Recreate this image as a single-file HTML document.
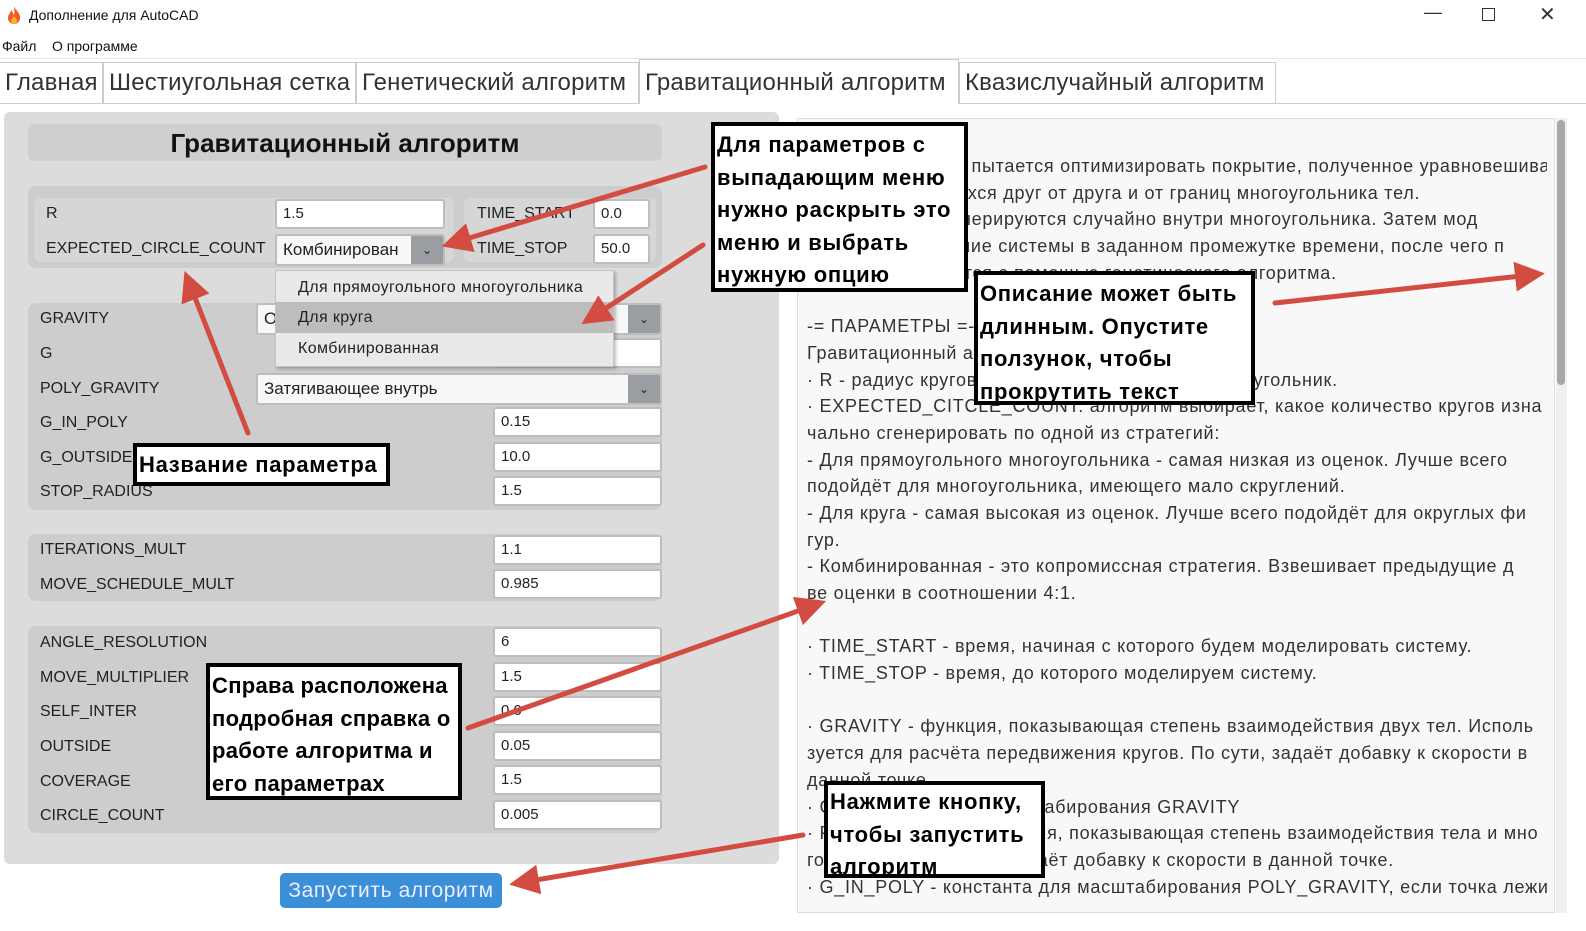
<!DOCTYPE html>
<html><head><meta charset="utf-8"><style>
*{margin:0;padding:0;box-sizing:border-box}
body{width:1586px;height:931px;background:#fff;font-family:"Liberation Sans",sans-serif;position:relative;overflow:hidden;color:#222}
.a{position:absolute}
.tab{position:absolute;top:62px;height:42px;border:1px solid #ccc;background:#fff;font-size:24px;letter-spacing:0.2px;color:#333;line-height:40px;padding-left:5px;white-space:nowrap}
.grp{position:absolute;background:#cdcdcd;border-radius:8px}
.lbl{position:absolute;font-size:16px;color:#222;white-space:nowrap}
.inp{position:absolute;height:30px;background:#fff;border:2px solid #bdbdbd;border-radius:3px;font-size:15px;line-height:26px;padding-left:6px;color:#222}
.combo{position:absolute;height:32px;background:#f7f7f7;border:2px solid #bdbdbd;border-radius:3px;font-size:17px;line-height:28px;padding-left:6px;overflow:hidden;white-space:nowrap}
.combo .arr{position:absolute;right:0;top:0;width:32px;height:100%;background:#9a9ea3;color:#222;text-align:center;font-size:12px;line-height:28px}
.note{position:absolute;background:#fff;border:4px solid #000;font-weight:bold;font-size:22px;letter-spacing:0.7px;color:#000;padding-left:2px;white-space:nowrap;overflow:hidden}
.desc div{height:26.7px;line-height:26.7px;white-space:nowrap;overflow:hidden}
</style></head><body>
<div class="a" style="left:6px;top:5px;width:16px;height:20px">
<svg width="16" height="20" viewBox="0 0 16 20"><path d="M8 1C9 5 14 7 14 13A6 6 0 0 1 2 13C2 9 5 8 5 5C7 7 7 9 8 10C9 7 8 4 8 1Z" fill="#f05a22"/><path d="M8 11C10 13 11 14 11 16A3 3 0 0 1 5 16C5 14 7 13 8 11Z" fill="#ffb02e"/></svg></div>
<div class="a" style="left:29px;top:7px;font-size:14px;color:#111">Дополнение для AutoCAD</div>
<div class="a" style="left:1424px;top:2px;font-size:18px;color:#333">—</div>
<div class="a" style="left:1482px;top:8px;width:13px;height:13px;border:1px solid #333"></div>
<div class="a" style="left:1539px;top:2px;font-size:20px;color:#333">✕</div>
<div class="a" style="left:2px;top:38px;font-size:14px;color:#111">Файл</div>
<div class="a" style="left:52px;top:38px;font-size:14px;color:#111">О программе</div>
<div class="a" style="left:0;top:58px;width:1586px;height:1px;background:#e6e6e6"></div>
<div class="tab" style="left:0;width:103px;border-left:none">Главная</div>
<div class="tab" style="left:103px;width:253px">Шестиугольная сетка</div>
<div class="tab" style="left:356px;width:283px">Генетический алгоритм</div>
<div class="tab" style="left:639px;width:320px;top:59px;height:45px;border-bottom:none;line-height:46px">Гравитационный алгоритм</div>
<div class="tab" style="left:959px;width:317px">Квазислучайный алгоритм</div>
<div class="a" style="left:1276px;top:103px;width:310px;height:1px;background:#ccc"></div>
<div class="a" style="left:4px;top:112px;width:775px;height:752px;background:#dcdcdc;border-radius:6px"></div>
<div class="a" style="left:28px;top:124px;width:634px;height:37px;background:#cfcfcf;border-radius:6px;text-align:center;font-weight:bold;font-size:26px;line-height:38px;color:#111">Гравитационный алгоритм</div>
<div class="grp" style="left:28px;top:186px;width:634px;height:82px"></div>
<div class="a" style="left:34px;top:198px;width:420px;height:64px;background:#d6d6d6;border-radius:6px"></div>
<div class="a" style="left:464px;top:198px;width:192px;height:64px;background:#d6d6d6;border-radius:6px"></div>
<div class="lbl" style="left:46px;top:205px">R</div>
<div class="lbl" style="left:46px;top:240px">EXPECTED_CIRCLE_COUNT</div>
<div class="inp" style="left:275px;top:199px;width:170px">1.5</div>
<div class="combo" style="left:275px;top:234px;width:170px">Комбинирован<div class="arr">⌄</div></div>
<div class="lbl" style="left:477px;top:205px">TIME_START</div>
<div class="lbl" style="left:477px;top:240px">TIME_STOP</div>
<div class="inp" style="left:593px;top:199px;width:57px">0.0</div>
<div class="inp" style="left:593px;top:234px;width:57px">50.0</div>

<div class="grp" style="left:28px;top:303px;width:634px;height:207px"></div>
<div class="lbl" style="left:40px;top:310px">GRAVITY</div>
<div class="lbl" style="left:40px;top:345px">G</div>
<div class="lbl" style="left:40px;top:380px">POLY_GRAVITY</div>
<div class="lbl" style="left:40px;top:414px">G_IN_POLY</div>
<div class="lbl" style="left:40px;top:449px">G_OUTSIDE</div>
<div class="lbl" style="left:40px;top:483px">STOP_RADIUS</div>
<div class="combo" style="left:256px;top:303px;width:406px">O<div class="arr">⌄</div></div>
<div class="inp" style="left:493px;top:338px;width:169px"></div>
<div class="combo" style="left:256px;top:373px;width:406px">Затягивающее внутрь<div class="arr">⌄</div></div>
<div class="inp" style="left:493px;top:407px;width:169px">0.15</div>
<div class="inp" style="left:493px;top:442px;width:169px">10.0</div>
<div class="inp" style="left:493px;top:476px;width:169px">1.5</div>

<div class="grp" style="left:28px;top:534px;width:634px;height:67px"></div>
<div class="lbl" style="left:40px;top:541px">ITERATIONS_MULT</div>
<div class="lbl" style="left:40px;top:576px">MOVE_SCHEDULE_MULT</div>
<div class="inp" style="left:493px;top:535px;width:169px">1.1</div>
<div class="inp" style="left:493px;top:569px;width:169px">0.985</div>

<div class="grp" style="left:28px;top:626px;width:634px;height:207px"></div>
<div class="lbl" style="left:40px;top:634px">ANGLE_RESOLUTION</div>
<div class="lbl" style="left:40px;top:669px">MOVE_MULTIPLIER</div>
<div class="lbl" style="left:40px;top:703px">SELF_INTER</div>
<div class="lbl" style="left:40px;top:738px">OUTSIDE</div>
<div class="lbl" style="left:40px;top:773px">COVERAGE</div>
<div class="lbl" style="left:40px;top:807px">CIRCLE_COUNT</div>
<div class="inp" style="left:493px;top:627px;width:169px">6</div>
<div class="inp" style="left:493px;top:662px;width:169px">1.5</div>
<div class="inp" style="left:493px;top:696px;width:169px">0.0</div>
<div class="inp" style="left:493px;top:731px;width:169px">0.05</div>
<div class="inp" style="left:493px;top:765px;width:169px">1.5</div>
<div class="inp" style="left:493px;top:800px;width:169px">0.005</div>

<div class="a" style="left:275px;top:270px;width:339px;height:97px;background:#e9e9e9;border:1px solid #c4c4c4;box-shadow:2px 2px 3px rgba(0,0,0,.25);font-size:16px;letter-spacing:0.4px">
<div style="height:31px;line-height:33px;padding-left:22px">Для прямоугольного многоугольника</div>
<div style="height:31px;line-height:31px;padding-left:22px;background:#bdbdbd">Для круга</div>
<div style="height:31px;line-height:31px;padding-left:22px">Комбинированная</div>
</div>

<div class="a" style="left:280px;top:873px;width:222px;height:35px;background:#3b8ed8;border-radius:5px;color:#eef;font-size:21px;letter-spacing:0.6px;text-align:center;line-height:36px">Запустить алгоритм</div>

<div class="a" style="left:797px;top:118px;width:758px;height:795px;background:#f8f8f8;border:1px solid #ddd"></div>
<div class="a" style="left:1556px;top:118px;width:11px;height:795px;background:#f0f0f0"></div>
<div class="a" style="left:1557px;top:120px;width:8px;height:265px;background:#a8a8a8;border-radius:4px"></div>
<div class="a desc" style="left:807px;top:153px;width:740px;font-size:18px;letter-spacing:0.75px;color:#333">
<div>Данный алгоритм пытается оптимизировать покрытие, полученное уравновешивани</div>
<div>ем отталкивающихся друг от друга и от границ многоугольника тел.</div>
<div>Сначала круги генерируются случайно внутри многоугольника. Затем мод</div>
<div>елируется движение системы в заданном промежутке времени, после чего п</div>
<div>окрытие улучшается с помощью генетического алгоритма.</div>
<div></div>
<div>-= ПАРАМЕТРЫ =-</div>
<div>Гравитационный алгоритм</div>
<div>· R - радиус кругов, которыми покрывается многоугольник.</div>
<div>· EXPECTED_CITCLE_COUNT: алгоритм выбирает, какое количество кругов изна</div>
<div>чально сгенерировать по одной из стратегий:</div>
<div>- Для прямоугольного многоугольника - самая низкая из оценок. Лучше всего</div>
<div>подойдёт для многоугольника, имеющего мало скруглений.</div>
<div>- Для круга - самая высокая из оценок. Лучше всего подойдёт для округлых фи</div>
<div>гур.</div>
<div>- Комбинированная - это копромиссная стратегия. Взвешивает предыдущие д</div>
<div>ве оценки в соотношении 4:1.</div>
<div></div>
<div>· TIME_START - время, начиная с которого будем моделировать систему.</div>
<div>· TIME_STOP - время, до которого моделируем систему.</div>
<div></div>
<div>· GRAVITY - функция, показывающая степень взаимодействия двух тел. Исполь</div>
<div>зуется для расчёта передвижения кругов. По сути, задаёт добавку к скорости в</div>
<div>данной точке.</div>
<div>· G - константа для масштабирования GRAVITY</div>
<div>· POLY_GRAVITY - функция, показывающая степень взаимодействия тела и мно</div>
<div>гоугольника. По сути, задаёт добавку к скорости в данной точке.</div>
<div>· G_IN_POLY - константа для масштабирования POLY_GRAVITY, если точка лежи</div>
</div>

<div class="note" style="left:711px;top:122px;width:257px;height:170px;line-height:32.5px;padding-top:3px">Для параметров с<br>выпадающим меню<br>нужно раскрыть это<br>меню и выбрать<br>нужную опцию</div>
<div class="note" style="left:974px;top:271px;width:281px;height:134px;line-height:32.5px;padding-top:3px">Описание может быть<br>длинным. Опустите<br>ползунок, чтобы<br>прокрутить текст</div>
<div class="note" style="left:133px;top:443px;width:257px;height:43px;line-height:36px">Название параметра</div>
<div class="note" style="left:206px;top:663px;width:256px;height:137px;line-height:32.5px;padding-top:3px;letter-spacing:0.3px">Справа расположена<br>подробная справка о<br>работе алгоритма и<br>его параметрах</div>
<div class="note" style="left:824px;top:781px;width:221px;height:97px;line-height:32.5px;padding-top:1px">Нажмите кнопку,<br>чтобы запустить<br>алгоритм</div>

<svg class="a" style="left:0;top:0" width="1586" height="931">
<defs><marker id="h" markerWidth="6" markerHeight="6" refX="3" refY="3" orient="auto" markerUnits="strokeWidth"><path d="M0,0 L6,3 L0,6 Z" fill="#d34c41"/></marker></defs>
<g stroke="#d34c41" stroke-width="5" stroke-linecap="round" fill="none">
<line x1="705" y1="167" x2="456" y2="242" marker-end="url(#h)"/>
<line x1="703" y1="245" x2="594" y2="316" marker-end="url(#h)"/>
<line x1="248" y1="433" x2="190" y2="285" marker-end="url(#h)"/>
<line x1="468" y1="728" x2="812" y2="606" marker-end="url(#h)"/>
<line x1="1275" y1="303" x2="1530" y2="275" marker-end="url(#h)"/>
<line x1="803" y1="835" x2="524" y2="882" marker-end="url(#h)"/>
</g></svg>
</body></html>
